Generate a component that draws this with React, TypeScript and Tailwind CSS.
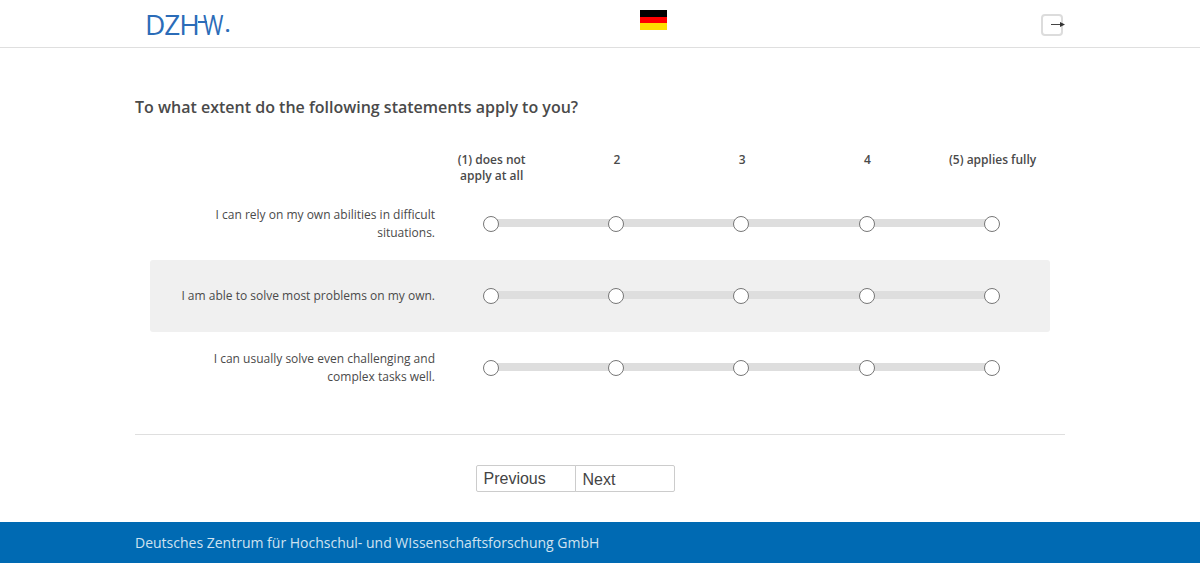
const font = "[font-family:'Open_Sans',sans-serif]";

const columns = ["(1) does not apply at all", "2", "3", "4", "(5) applies fully"];

const rows = [
  { text: "I can rely on my own abilities in difficult situations.", shaded: false },
  { text: "I am able to solve most problems on my own.", shaded: true },
  { text: "I can usually solve even challenging and complex tasks well.", shaded: false },
];

function Scale() {
  return (
    <div className="relative flex w-[626px] shrink-0">
      <div className="absolute left-[62px] right-[62px] top-[3px] h-2 bg-[#dedede]" />
      {columns.map((c) => (
        <div key={c} className="relative flex w-[125.25px] justify-center">
          <span className="h-4 w-4 rounded-full border border-[#777] bg-white" />
        </div>
      ))}
    </div>
  );
}

export default function App() {
  return (
    <div className={`${font} h-[572px] bg-white text-[#4a4a4a]`}>
      <header className="h-12 border-b border-[#dfdfdf]">
        <div className="mx-auto flex h-[47px] w-[930px] items-start justify-between">
          <div className="relative ml-[10px] mt-[8px] flex h-[30px] w-[90px] items-start text-[28px] leading-[32px] tracking-[-1px] text-[#2b6cb8]">
            <span>DZH</span>
            <span className="absolute left-[58px] top-0 inline-block origin-left scale-x-[0.79]">W</span>
            <span className="absolute left-[80px] top-[1px] text-[18px] font-bold">.</span>
            <span className="absolute left-[53px] top-[13px] h-[2px] w-[9px] bg-[#2b6cb8]" />
          </div>
          <div className="mt-[10px] ml-[31px] flex h-5 w-[27px] flex-col">
            <div className="h-[6.67px] bg-black" />
            <div className="h-[6.67px] bg-[#ff0000]" />
            <div className="h-[6.67px] bg-[#ffdf00]" />
          </div>
          <div className="relative mt-[14px] h-[22px] w-6">
            <div className="h-[22px] w-[22px] rounded-[4px] border-2 border-[#dcdcdc]" />
            <svg className="absolute left-[10px] top-[6px]" width="14" height="10" viewBox="0 0 14 10">
              <path d="M0 4.5H10" stroke="#444" strokeWidth="1" />
              <path d="M9 2L14 4.5L9 7Z" fill="#333" />
            </svg>
          </div>
        </div>
      </header>

      <main className="mx-auto w-[930px]">
        <h1 className="mt-[48px] text-base leading-[22px] font-semibold">
          To what extent do the following statements apply to you?
        </h1>

        <div className="mt-[34px] ml-[15px] w-[900px]">
          <div className="flex h-[36px]">
            <div className="w-[279px] shrink-0" />
            {columns.map((c) => (
              <div key={c} className="flex w-[125.25px] shrink-0 justify-center text-center text-xs leading-[16px] font-semibold">
                <span className="w-[100px]">{c}</span>
              </div>
            ))}
          </div>
          {rows.map((r) => (
            <div
              key={r.text}
              className={`flex h-[72px] items-center rounded-[3px] ${r.shaded ? "bg-[#f0f0f0]" : ""}`}
            >
              <div className="w-[285px] shrink-0 pl-[30px] text-right text-xs leading-[18px]">{r.text}</div>
              <div className="-ml-[6.7px]">
                <Scale />
              </div>
            </div>
          ))}
        </div>

        <div className="mt-[30px] border-t border-[#dfdfdf]" />

        <div className="mt-[30px] flex justify-center pr-[50px] font-['Liberation_Sans'] text-base text-[#444]">
          <button className="h-[27px] w-[100px] rounded-l-[2px] border border-[#ccc] pl-[7px] text-left leading-[24px]">Previous</button>
          <button className="-ml-px h-[27px] w-[100px] rounded-r-[2px] border border-[#ccc] pl-[7px] pt-[2px] text-left leading-[24px]">Next</button>
        </div>
      </main>

      <footer className="mt-[30px] h-[41px] bg-[#006ab3]">
        <div className="mx-auto w-[930px] text-sm leading-[41px] text-[#cfe2f0]">
          Deutsches Zentrum für Hochschul- und WIssenschaftsforschung GmbH
        </div>
      </footer>
    </div>
  );
}
